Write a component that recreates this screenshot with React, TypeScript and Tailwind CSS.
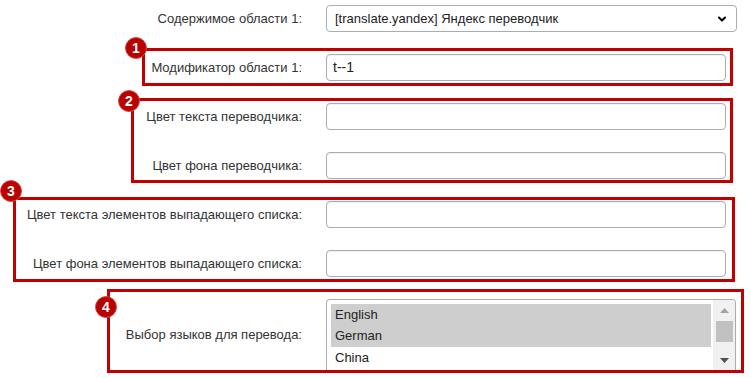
import { ChevronDown } from "lucide-react";

const font = { fontFamily: '"Liberation Sans", Arial, sans-serif' };

function Badge({ n, className }: { n: number; className: string }) {
  return (
    <div
      className={`absolute z-10 w-[22px] h-[22px] rounded-full bg-[#b80000] border border-[#d84a4a] flex items-center justify-center text-white text-[14px] font-bold leading-none ${className}`}
    >
      {n}
    </div>
  );
}

function Row({ label, children, className = "" }: { label: string; children: React.ReactNode; className?: string }) {
  return (
    <div className={`flex items-center gap-[24px] ${className}`}>
      <div className="flex-1 text-right text-[13px] text-[#333] whitespace-nowrap">{label}</div>
      {children}
    </div>
  );
}

function TextInput({ value = "" }: { value?: string }) {
  return (
    <div className="w-[400px] h-[27px] border border-[#a7adb3] rounded-[4px] bg-white flex items-center px-[6px] text-[14px] text-[#222] shadow-[inset_0_1px_1px_rgba(0,0,0,0.06)]">
      {value}
    </div>
  );
}

export default function App() {
  return (
    <div className="w-[751px] h-[378px] bg-white overflow-hidden pt-[5px]" style={font}>
      {/* area content */}
      <Row label="Содержимое области 1:" className="pr-[14px]">
        <div className="w-[411px] h-[27px] border border-[#a7adb3] rounded-[4px] bg-white flex items-center justify-between pl-[8px] pr-[8px] text-[13px] text-[#222]">
          <span>[translate.yandex] Яндекс переводчик</span>
          <ChevronDown className="w-[12px] h-[12px] text-black" strokeWidth={4} />
        </div>
      </Row>

      {/* 1 */}
      <div className="relative mt-[16px] ml-[142px] w-[591px] border-[3px] border-[#c20000] pt-[3px] pb-[2px] pr-[4px]">
        <Badge n={1} className="left-[-20px] top-[-14px]" />
        <Row label="Модификатор области 1:">
          <TextInput value="t--1" />
        </Row>
      </div>

      {/* 2 */}
      <div className="relative mt-[12px] ml-[131px] w-[602px] border-[3px] border-[#c20000] pt-[2px] pb-[1px] pr-[4px] flex flex-col gap-[22px]">
        <Badge n={2} className="left-[-16px] top-[-11px]" />
        <Row label="Цвет текста переводчика:">
          <TextInput />
        </Row>
        <Row label="Цвет фона переводчика:">
          <TextInput />
        </Row>
      </div>

      {/* 3 */}
      <div className="relative mt-[14px] ml-[13px] w-[722px] border-[3px] border-[#c20000] pt-[1px] pb-[2px] pr-[6px] flex flex-col gap-[22px]">
        <Badge n={3} className="left-[-16px] top-[-20px]" />
        <Row label="Цвет текста элементов выпадающего списка:">
          <TextInput />
        </Row>
        <Row label="Цвет фона элементов выпадающего списка:">
          <TextInput />
        </Row>
      </div>

      {/* 4 */}
      <div className="relative mt-[7px] ml-[107px] w-[637px] h-[84px] border-[3px] border-[#c20000] pt-[7px] pr-[5px]">
        <Badge n={4} className="left-[-15px] top-[4px]" />
        <Row label="Выбор языков для перевода:">
          <div className="w-[410px] h-[71px] overflow-hidden border border-b-0 border-[#a7adb3] rounded-t-[4px] bg-white flex text-[13px] text-[#222]">
            <div className="flex-1 pl-[4px] pt-[4px] pr-[2px]">
              <div className="bg-[#cecece] h-[21px] flex items-center pl-[4px]">English</div>
              <div className="bg-[#cecece] h-[22px] flex items-center pl-[4px]">German</div>
              <div className="h-[22px] flex items-center pl-[4px]">China</div>
            </div>
            <div className="w-[22px] bg-[#f1f1f1] flex flex-col items-center pt-[8px]">
              <svg width="9" height="5" viewBox="0 0 9 5">
                <path d="M0 5 L4.5 0 L9 5 Z" fill="#a3a3a3" />
              </svg>
              <div className="w-[17px] h-[21px] bg-[#c1c1c1] mt-[8px]" />
              <svg width="9" height="5" viewBox="0 0 9 5" className="mt-[16px]">
                <path d="M0 0 L9 0 L4.5 5 Z" fill="#505050" />
              </svg>
            </div>
          </div>
        </Row>
      </div>
    </div>
  );
}
